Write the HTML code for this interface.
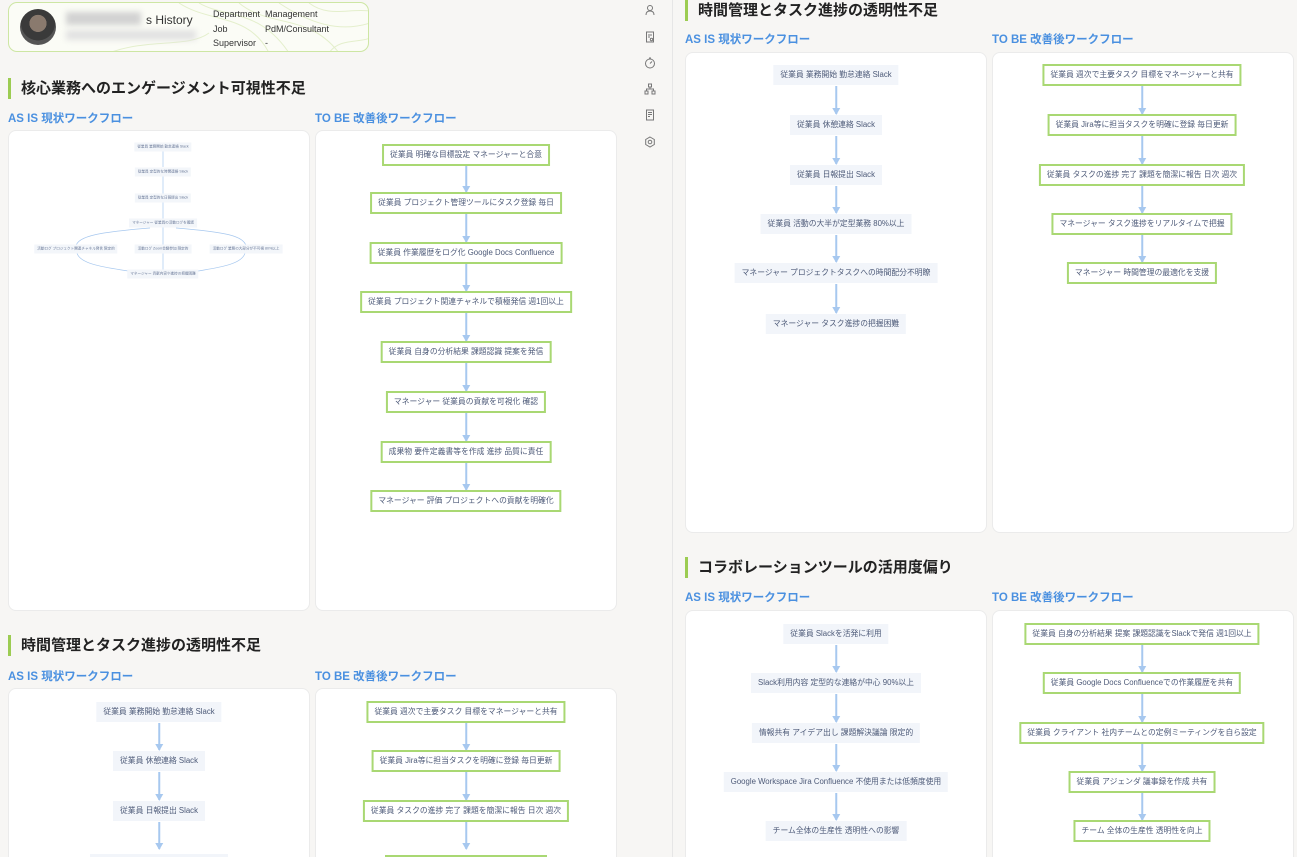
<!DOCTYPE html>
<html style="width:1297px;height:857px;overflow:hidden"><head><meta charset="utf-8">
<style>
*{margin:0;padding:0;box-sizing:border-box}
body{width:1297px;height:857px;overflow:hidden;background:#f7f6f4;font-family:"Liberation Sans","Noto Sans CJK JP",sans-serif;position:relative}
.abs{position:absolute}
.card{position:absolute;background:#fff;border:1px solid #ebebeb;border-radius:8px}
.h{position:absolute;font-size:15px;font-weight:bold;color:#222;border-left:3px solid #9ccc52;padding-left:10px;height:21px;line-height:21px}
.sub{position:absolute;font-size:11.5px;font-weight:bold;color:#4a90e0}
.n,.t{position:absolute;transform:translate(-50%,-50%);white-space:nowrap;font-size:7.8px;color:#4d5a78;padding:0 7px;height:20px;line-height:20px}
.n{background:#f2f5fa}
.t{background:#fff;border:2px solid #a9d873;height:22px;line-height:18px;padding:0 6px}
.s{position:absolute;transform:translate(-50%,-50%);white-space:nowrap;font-size:3.6px;color:#6b7a99;background:#f3f6fa;padding:2px 3px}
.a{position:absolute;width:1.5px;background:#a7c8ef;transform:translateX(-50%)}
.a:after{content:"";position:absolute;bottom:-1px;left:50%;transform:translateX(-50%);border-left:4px solid transparent;border-right:4px solid transparent;border-top:7px solid #a7c8ef}
.ic{position:absolute;left:644px;width:12px;height:12px}
</style></head><body>

<!-- profile card -->
<div class="abs" style="left:8px;top:2px;width:361px;height:50px;border:1.5px solid #cde6a3;border-radius:9px;background:#fbfcf6;overflow:hidden">
<svg class="abs" style="left:0;top:0" width="361" height="50"><g fill="none" stroke="#e4efcc" stroke-width="1"><path d="M170 0 C200 20 240 10 260 50"/><path d="M190 0 C215 15 250 5 280 50"/><path d="M230 0 C260 25 300 10 330 50"/><path d="M270 0 C300 20 330 30 361 20"/><path d="M300 0 C320 15 340 5 361 8"/><path d="M100 50 C140 35 180 45 200 30"/><path d="M320 50 C330 35 350 40 361 35"/></g></svg>
<div class="abs" style="left:11px;top:6px;width:36px;height:36px;border-radius:50%;background:radial-gradient(circle at 50% 40%,#8a7a6e 0 30%,#3a3a3a 31% 60%,#555 61%)"></div>
<div class="abs" style="left:57px;top:9px;width:75px;height:13px;background:#d2d2d2;filter:blur(3px)"></div>
<div class="abs" style="left:137px;top:10px;font-size:12px;color:#333">s History</div>
<div class="abs" style="left:57px;top:27px;width:130px;height:10px;background:#e2e2e2;filter:blur(3px)"></div>
<div class="abs" style="left:204px;top:4px;font-size:9px;color:#333;line-height:14.5px">Department<br>Job<br>Supervisor</div>
<div class="abs" style="left:256px;top:4px;font-size:9px;color:#333;line-height:14.5px">Management<br>PdM/Consultant<br>-</div>
</div>

<!-- sidebar -->
<div class="abs" style="left:672px;top:0;width:1px;height:857px;background:#e6e6e6"></div>
<svg class="ic" style="top:4px" viewBox="0 0 12 12" fill="none" stroke="#777" stroke-width="1"><circle cx="6" cy="4" r="2.5"/><path d="M2 11c0-3 2-4 4-4s4 1 4 4"/></svg>
<svg class="ic" style="top:31px" viewBox="0 0 12 12" fill="none" stroke="#777" stroke-width="1"><rect x="2.5" y="1" width="7" height="10"/><path d="M4 4h4M4 6h2"/><circle cx="7.5" cy="8.5" r="1.2"/></svg>
<svg class="ic" style="top:57px" viewBox="0 0 12 12" fill="none" stroke="#777" stroke-width="1"><circle cx="6" cy="6.5" r="4.5"/><path d="M6 6.5L8 4.5M5 1h2"/></svg>
<svg class="ic" style="top:83px" viewBox="0 0 12 12" fill="none" stroke="#777" stroke-width="1"><rect x="4.5" y="1" width="3" height="3"/><rect x="1" y="8" width="3" height="3"/><rect x="8" y="8" width="3" height="3"/><path d="M6 4v2M2.5 8V6h7v2"/></svg>
<svg class="ic" style="top:109px" viewBox="0 0 12 12" fill="none" stroke="#777" stroke-width="1"><rect x="2.5" y="1" width="7" height="10"/><path d="M4 3.5h4M4 5.5h4M4 7.5h2"/></svg>
<svg class="ic" style="top:136px" viewBox="0 0 12 12" fill="none" stroke="#777" stroke-width="1"><path d="M6 1l4.3 2.5v5L6 11 1.7 8.5v-5z"/><circle cx="6" cy="6" r="1.8"/></svg>

<!-- LEFT section 1 -->
<div class="h" style="left:8px;top:78px">核心業務へのエンゲージメント可視性不足</div>
<div class="sub" style="left:8px;top:110px">AS IS 現状ワークフロー</div>
<div class="sub" style="left:315px;top:110px">TO BE 改善後ワークフロー</div>
<div class="card" style="left:8px;top:130px;width:302px;height:481px"></div>
<div class="card" style="left:315px;top:130px;width:302px;height:481px"></div>

<svg class="abs" style="left:0;top:0" width="320" height="290" fill="none" stroke="#a7c8ef" stroke-width="0.7">
<path d="M163 150v17M163 175v19M163 201v18M163 226v19M163 252v18"/>
<path d="M150 228 C100 232 78 236 76 246M176 228 C226 232 244 236 246 246M77 253 C80 265 110 268 128 271M245 253 C242 265 215 268 198 271"/>
</svg>
<div class="s" style="left:163px;top:147px">従業員 業務開始 勤怠連絡 Slack</div>
<div class="s" style="left:163px;top:172px">従業員 定型的な時間連絡 Slack</div>
<div class="s" style="left:163px;top:198px">従業員 定型的な日報提出 Slack</div>
<div class="s" style="left:163px;top:223px">マネージャー 従業員の活動ログを確認</div>
<div class="s" style="left:76px;top:249px">活動ログ プロジェクト関連チャネル発言 限定的</div>
<div class="s" style="left:163px;top:249px">活動ログ Zoom会議参加 限定的</div>
<div class="s" style="left:246px;top:249px">活動ログ 業務の大部分が不可視 80%以上</div>
<div class="s" style="left:163px;top:274px">マネージャー 貢献内容や進捗の把握困難</div>

<div class="t" style="left:466px;top:155px">従業員 明確な目標設定 マネージャーと合意</div>
<div class="a" style="left:466px;top:166px;height:26px"></div>
<div class="t" style="left:466px;top:203px">従業員 プロジェクト管理ツールにタスク登録 毎日</div>
<div class="a" style="left:466px;top:214px;height:28px"></div>
<div class="t" style="left:466px;top:253px">従業員 作業履歴をログ化 Google Docs Confluence</div>
<div class="a" style="left:466px;top:264px;height:27px"></div>
<div class="t" style="left:466px;top:302px">従業員 プロジェクト関連チャネルで積極発信 週1回以上</div>
<div class="a" style="left:466px;top:313px;height:28px"></div>
<div class="t" style="left:466px;top:352px">従業員 自身の分析結果 課題認識 提案を発信</div>
<div class="a" style="left:466px;top:363px;height:28px"></div>
<div class="t" style="left:466px;top:402px">マネージャー 従業員の貢献を可視化 確認</div>
<div class="a" style="left:466px;top:413px;height:28px"></div>
<div class="t" style="left:466px;top:452px">成果物 要件定義書等を作成 進捗 品質に責任</div>
<div class="a" style="left:466px;top:463px;height:27px"></div>
<div class="t" style="left:466px;top:501px">マネージャー 評価 プロジェクトへの貢献を明確化</div>

<!-- LEFT section 2 -->
<div class="h" style="left:8px;top:635px">時間管理とタスク進捗の透明性不足</div>
<div class="sub" style="left:8px;top:668px">AS IS 現状ワークフロー</div>
<div class="sub" style="left:315px;top:668px">TO BE 改善後ワークフロー</div>
<div class="card" style="left:8px;top:688px;width:302px;height:200px"></div>
<div class="card" style="left:315px;top:688px;width:302px;height:200px"></div>
<div class="n" style="left:159px;top:712px">従業員 業務開始 勤怠連絡 Slack</div>
<div class="a" style="left:159px;top:723px;height:27px"></div>
<div class="n" style="left:159px;top:761px">従業員 休憩連絡 Slack</div>
<div class="a" style="left:159px;top:772px;height:28px"></div>
<div class="n" style="left:159px;top:811px">従業員 日報提出 Slack</div>
<div class="a" style="left:159px;top:822px;height:27px"></div>
<div class="n" style="left:159px;top:864px;width:138px"></div>
<div class="t" style="left:466px;top:712px">従業員 週次で主要タスク 目標をマネージャーと共有</div>
<div class="a" style="left:466px;top:723px;height:27px"></div>
<div class="t" style="left:466px;top:761px">従業員 Jira等に担当タスクを明確に登録 毎日更新</div>
<div class="a" style="left:466px;top:772px;height:28px"></div>
<div class="t" style="left:466px;top:811px">従業員 タスクの進捗 完了 課題を簡潔に報告 日次 週次</div>
<div class="a" style="left:466px;top:822px;height:27px"></div>
<div class="t" style="left:466px;top:866px;width:162px"></div>

<!-- RIGHT section 1 -->
<div class="h" style="left:685px;top:0px">時間管理とタスク進捗の透明性不足</div>
<div class="sub" style="left:685px;top:31px">AS IS 現状ワークフロー</div>
<div class="sub" style="left:992px;top:31px">TO BE 改善後ワークフロー</div>
<div class="card" style="left:685px;top:52px;width:302px;height:481px"></div>
<div class="card" style="left:992px;top:52px;width:302px;height:481px"></div>
<div class="n" style="left:836px;top:75px">従業員 業務開始 勤怠連絡 Slack</div>
<div class="a" style="left:836px;top:86px;height:28px"></div>
<div class="n" style="left:836px;top:125px">従業員 休憩連絡 Slack</div>
<div class="a" style="left:836px;top:136px;height:28px"></div>
<div class="n" style="left:836px;top:175px">従業員 日報提出 Slack</div>
<div class="a" style="left:836px;top:186px;height:27px"></div>
<div class="n" style="left:836px;top:224px">従業員 活動の大半が定型業務 80%以上</div>
<div class="a" style="left:836px;top:235px;height:27px"></div>
<div class="n" style="left:836px;top:273px">マネージャー プロジェクトタスクへの時間配分不明瞭</div>
<div class="a" style="left:836px;top:284px;height:29px"></div>
<div class="n" style="left:836px;top:324px">マネージャー タスク進捗の把握困難</div>

<div class="t" style="left:1142px;top:75px">従業員 週次で主要タスク 目標をマネージャーと共有</div>
<div class="a" style="left:1142px;top:86px;height:28px"></div>
<div class="t" style="left:1142px;top:125px">従業員 Jira等に担当タスクを明確に登録 毎日更新</div>
<div class="a" style="left:1142px;top:136px;height:28px"></div>
<div class="t" style="left:1142px;top:175px">従業員 タスクの進捗 完了 課題を簡潔に報告 日次 週次</div>
<div class="a" style="left:1142px;top:186px;height:27px"></div>
<div class="t" style="left:1142px;top:224px">マネージャー タスク進捗をリアルタイムで把握</div>
<div class="a" style="left:1142px;top:235px;height:27px"></div>
<div class="t" style="left:1142px;top:273px">マネージャー 時間管理の最適化を支援</div>

<!-- RIGHT section 2 -->
<div class="h" style="left:685px;top:557px">コラボレーションツールの活用度偏り</div>
<div class="sub" style="left:685px;top:589px">AS IS 現状ワークフロー</div>
<div class="sub" style="left:992px;top:589px">TO BE 改善後ワークフロー</div>
<div class="card" style="left:685px;top:610px;width:302px;height:260px"></div>
<div class="card" style="left:992px;top:610px;width:302px;height:260px"></div>
<div class="n" style="left:836px;top:634px">従業員 Slackを活発に利用</div>
<div class="a" style="left:836px;top:645px;height:27px"></div>
<div class="n" style="left:836px;top:683px">Slack利用内容 定型的な連絡が中心 90%以上</div>
<div class="a" style="left:836px;top:694px;height:28px"></div>
<div class="n" style="left:836px;top:733px">情報共有 アイデア出し 課題解決議論 限定的</div>
<div class="a" style="left:836px;top:744px;height:27px"></div>
<div class="n" style="left:836px;top:782px">Google Workspace Jira Confluence 不使用または低頻度使用</div>
<div class="a" style="left:836px;top:793px;height:27px"></div>
<div class="n" style="left:836px;top:831px">チーム全体の生産性 透明性への影響</div>

<div class="t" style="left:1142px;top:634px">従業員 自身の分析結果 提案 課題認識をSlackで発信 週1回以上</div>
<div class="a" style="left:1142px;top:645px;height:27px"></div>
<div class="t" style="left:1142px;top:683px">従業員 Google Docs Confluenceでの作業履歴を共有</div>
<div class="a" style="left:1142px;top:694px;height:28px"></div>
<div class="t" style="left:1142px;top:733px">従業員 クライアント 社内チームとの定例ミーティングを自ら設定</div>
<div class="a" style="left:1142px;top:744px;height:27px"></div>
<div class="t" style="left:1142px;top:782px">従業員 アジェンダ 議事録を作成 共有</div>
<div class="a" style="left:1142px;top:793px;height:27px"></div>
<div class="t" style="left:1142px;top:831px">チーム 全体の生産性 透明性を向上</div>

</body></html>
